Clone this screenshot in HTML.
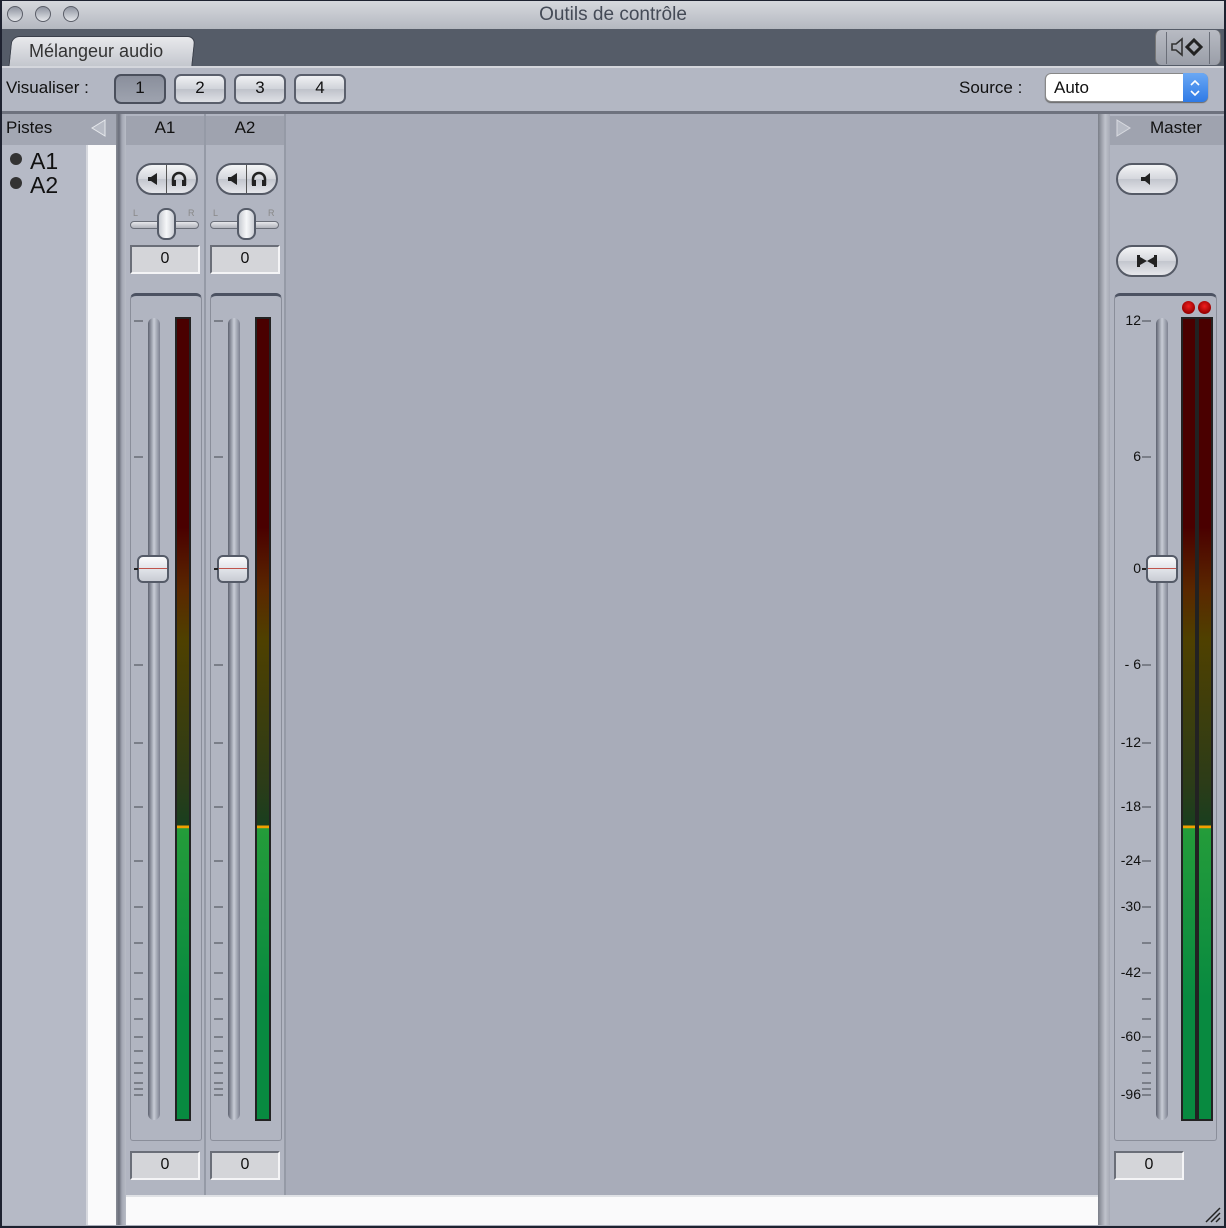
<!DOCTYPE html>
<html><head><meta charset="utf-8"><style>
*{margin:0;padding:0;box-sizing:border-box}
body{width:1226px;height:1228px;position:relative;overflow:hidden;background:#a8acb9;font-family:"Liberation Sans",sans-serif;color:#111}
.a{position:absolute}
.t{font-size:17px}
.btn{position:absolute;border:2px solid #5a5f6c;border-radius:7px;background:linear-gradient(#f0f1f4,#cfd2d9 50%,#bfc2ca 51%,#dfe1e6);text-align:center;font-size:17px;line-height:24px}
.pill{position:absolute;border:2px solid #555a66;border-radius:16px;background:linear-gradient(#f4f5f7,#d4d6dc 50%,#c3c6ce 51%,#e6e7eb)}
.vbox{position:absolute;background:#d4d5d9;border:2px solid #6a6e78;border-right-color:#f4f4f6;border-bottom-color:#f4f4f6;text-align:center;font-size:16px;line-height:24px}
.track{position:absolute;width:12px;border-radius:6px;background:linear-gradient(90deg,#5d6270,#c8ccd6 50%,#7d8290);}
.meter{position:absolute;border:2px solid #222;background:linear-gradient(#4a0000 0%,#4a0000 26%,#5a2800 34%,#4f4000 40%,#2c3c18 58%,#1a3e1e 63%,#1a3e1e 63.3%,#f0a000 63.3%,#f0a000 63.6%,#249c3a 63.7%,#088a40 85%,#088a40 100%)}
.knob{position:absolute;width:32px;height:28px;border:2px solid #555b68;border-radius:6px;background:linear-gradient(#fafbfc,#dcdfe5 60%,#c9ccd4)}
.knob:after{content:"";position:absolute;left:0;right:0;top:11px;height:1px;background:#c0544c}
.tick{position:absolute;height:2px;background:#7a7e88;width:9px}
.fbox{position:absolute;border:1px solid #8a8e9a;border-top:3px solid #4c5262;border-radius:6px 6px 3px 3px}
.lab{position:absolute;font-size:14px;text-align:right;width:40px}
</style></head><body>
<div class="a" style="left:0;top:0;width:1226px;height:1228px;border:2px solid #1e2230;border-top:1px solid #1e2230"></div>
<div class="a" style="left:2px;top:1px;width:1222px;height:28px;background:linear-gradient(#d6d8dd,#b4b8c0)"></div>
<div class="a" style="left:7px;top:6px;width:16px;height:16px;border-radius:50%;border:1px solid #5a5e68;background:linear-gradient(#8f94a0,#e4e6ea)"></div>
<div class="a" style="left:35px;top:6px;width:16px;height:16px;border-radius:50%;border:1px solid #5a5e68;background:linear-gradient(#8f94a0,#e4e6ea)"></div>
<div class="a" style="left:63px;top:6px;width:16px;height:16px;border-radius:50%;border:1px solid #5a5e68;background:linear-gradient(#8f94a0,#e4e6ea)"></div>
<div class="a t" style="left:0;width:1226px;top:4px;text-align:center;color:#444a56;font-size:19px">Outils de contrôle</div>
<div class="a" style="left:2px;top:29px;width:1222px;height:37px;background:#555c68"></div>
<div class="a" style="left:10px;top:36px;width:184px;height:30px;background:linear-gradient(#e8e9ec,#c4c7ce);border-radius:8px 8px 0 0;border:1px solid #3a3f4a;border-bottom:none;transform:skewX(-6deg)"></div>
<div class="a t" style="left:29px;top:41px;color:#333;font-size:18px">Mélangeur audio</div>
<div class="a" style="left:1155px;top:30px;width:66px;height:35px;background:linear-gradient(#b8bbc3,#9a9ea8);border-left:1px solid #777;border-right:1px solid #777;border-radius:6px"></div>
<div class="a" style="left:1166px;top:32px;width:44px;height:32px;border-left:1px solid #6a6e78;border-right:1px solid #6a6e78"></div>
<svg class="a" style="left:1170px;top:36px" width="38" height="22"><path d="M2 8h4l6-5v16l-6-5H2z" fill="none" stroke="#333" stroke-width="1.6"/><path d="M24 4l7 7-7 7-7-7z" fill="none" stroke="#222" stroke-width="3"/></svg>
<div class="a" style="left:2px;top:66px;width:1222px;height:46px;background:#b3b7c3;border-top:2px solid #d4d6dc"></div>
<div class="a t" style="left:6px;top:78px">Visualiser :</div>
<div class="btn" style="left:114px;top:74px;width:52px;height:30px;background:linear-gradient(#8a8f9c,#9ea3af);border-color:#4a4f5c">1</div>
<div class="btn" style="left:174px;top:74px;width:52px;height:30px">2</div>
<div class="btn" style="left:234px;top:74px;width:52px;height:30px">3</div>
<div class="btn" style="left:294px;top:74px;width:52px;height:30px">4</div>
<div class="a t" style="left:959px;top:78px">Source :</div>
<div class="a" style="left:1045px;top:73px;width:163px;height:29px;background:#fff;border-radius:6px;border:1px solid #888;box-shadow:0 1px 1px #666"></div>
<div class="a t" style="left:1054px;top:78px">Auto</div>
<div class="a" style="left:1183px;top:73px;width:25px;height:29px;background:linear-gradient(#6aa8f4,#2f7ae6);border-radius:0 6px 6px 0"></div>
<svg class="a" style="left:1188px;top:78px" width="14" height="20"><path d="M3 7l4-4 4 4M3 13l4 4 4-4" fill="none" stroke="#fff" stroke-width="1.6"/></svg>
<div class="a" style="left:2px;top:111px;width:1222px;height:3px;background:#6e727e"></div>
<div class="a" style="left:2px;top:114px;width:114px;height:1111px;background:#b6bac6"></div>
<div class="a" style="left:2px;top:114px;width:114px;height:31px;background:#a3a7b3"></div>
<div class="a t" style="left:6px;top:118px">Pistes</div>
<svg class="a" style="left:90px;top:118px" width="16" height="20"><path d="M15 2L2 10l13 8z" fill="#b8bcc6" stroke="#e6e8ec" stroke-width="1"/></svg>
<div class="a" style="left:86px;top:145px;width:30px;height:1080px;background:#fafafb;border-left:2px solid #d6d8de"></div>
<div class="a" style="left:10px;top:153px;width:12px;height:12px;border-radius:50%;background:#333"></div>
<div class="a" style="left:10px;top:177px;width:12px;height:12px;border-radius:50%;background:#333"></div>
<div class="a" style="left:30px;top:148px;font-size:23px">A1</div>
<div class="a" style="left:30px;top:172px;font-size:23px">A2</div>
<div class="a" style="left:116px;top:114px;width:10px;height:1111px;background:linear-gradient(90deg,#888c96,#6a6e7a 30%,#a4a8b4 60%,#b8bcc6)"></div>
<div class="a" style="left:126px;top:1195px;width:972px;height:30px;background:#fafafb;border-top:2px solid #dfe1e5"></div>
<div class="a" style="left:1098px;top:114px;width:12px;height:1111px;background:linear-gradient(90deg,#7a7e88,#9da1ab 30%,#bfc2cb 60%,#a6aab5)"></div>
<div class="a" style="left:1110px;top:114px;width:114px;height:1111px;background:#b1b5c1"></div>
<div class="a" style="left:1110px;top:116px;width:114px;height:29px;background:#9fa3af"></div>
<svg class="a" style="left:1115px;top:118px" width="16" height="20"><path d="M2 2l13 8-13 8z" fill="#b8bcc6" stroke="#d8dae0" stroke-width="1"/></svg>
<div class="a t" style="left:1150px;top:118px">Master</div>
<div class="pill" style="left:1116px;top:163px;width:62px;height:32px"></div>
<svg class="a" style="left:1138px;top:171px" width="16" height="16"><path d="M3 6h4l5-4v12l-5-4H3z" fill="#222"/></svg>
<div class="pill" style="left:1116px;top:245px;width:62px;height:32px"></div>
<svg class="a" style="left:1133px;top:253px" width="28" height="16"><path d="M4 2h3v12H4zM21 2h3v12h-3z" fill="#222"/><path d="M7 4l7 4-7 4zM21 4l-7 4 7 4z" fill="#222"/></svg>
<div class="fbox" style="left:1114px;top:293px;width:103px;height:848px"></div>
<div class="track" style="left:1156px;top:318px;height:802px"></div>
<div class="meter" style="left:1181px;top:317px;width:16px;height:804px"></div>
<div class="meter" style="left:1197px;top:317px;width:16px;height:804px"></div>
<div class="a" style="left:1182px;top:301px;width:13px;height:13px;border-radius:50%;background:radial-gradient(circle at 50% 40%,#f02020,#900 70%,#444)"></div>
<div class="a" style="left:1198px;top:301px;width:13px;height:13px;border-radius:50%;background:radial-gradient(circle at 50% 40%,#f02020,#900 70%,#444)"></div>
<div class="knob" style="left:1146px;top:555px"></div>
<div class="lab" style="left:1101px;top:312px">12</div>
<div class="lab" style="left:1101px;top:448px">6</div>
<div class="lab" style="left:1101px;top:560px">0</div>
<div class="lab" style="left:1101px;top:656px">- 6</div>
<div class="lab" style="left:1101px;top:734px">-12</div>
<div class="lab" style="left:1101px;top:798px">-18</div>
<div class="lab" style="left:1101px;top:852px">-24</div>
<div class="lab" style="left:1101px;top:898px">-30</div>
<div class="lab" style="left:1101px;top:964px">-42</div>
<div class="lab" style="left:1101px;top:1028px">-60</div>
<div class="lab" style="left:1101px;top:1086px">-96</div>
<div class="tick" style="left:1142px;top:320px"></div><div class="tick" style="left:1142px;top:456px"></div><div class="tick" style="left:1142px;top:568px;background:#222;width:4px"></div><div class="tick" style="left:1142px;top:664px"></div><div class="tick" style="left:1142px;top:742px"></div><div class="tick" style="left:1142px;top:806px"></div><div class="tick" style="left:1142px;top:860px"></div><div class="tick" style="left:1142px;top:906px"></div><div class="tick" style="left:1142px;top:942px"></div><div class="tick" style="left:1142px;top:972px"></div><div class="tick" style="left:1142px;top:998px"></div><div class="tick" style="left:1142px;top:1018px"></div><div class="tick" style="left:1142px;top:1036px"></div><div class="tick" style="left:1142px;top:1050px"></div><div class="tick" style="left:1142px;top:1062px"></div><div class="tick" style="left:1142px;top:1072px"></div><div class="tick" style="left:1142px;top:1082px"></div><div class="tick" style="left:1142px;top:1088px"></div><div class="tick" style="left:1142px;top:1094px"></div>
<div class="vbox" style="left:1114px;top:1151px;width:70px;height:29px">0</div>
<svg class="a" style="left:1204px;top:1206px" width="18" height="18"><path d="M2 16L16 2M7 16L16 7M12 16l4-4" stroke="#222" stroke-width="1.5"/></svg>

<div class="a" style="left:126px;top:114px;width:80px;height:1081px;background:#b1b5c1;border-right:2px solid #959aa6"></div>
<div class="a" style="left:126px;top:116px;width:78px;height:29px;background:#9fa3af"></div>
<div class="a t" style="left:126px;width:78px;top:118px;text-align:center">A1</div>
<div class="pill" style="left:136px;top:163px;width:62px;height:32px"></div>
<div class="a" style="left:166px;top:165px;width:1px;height:28px;background:#555"></div>
<svg class="a" style="left:144px;top:171px" width="18" height="16"><path d="M4 6h3l6-4v12l-6-4H4z" fill="#222"/></svg>
<svg class="a" style="left:169px;top:170px" width="20" height="18"><path d="M4 15V9a6 6 0 0 1 12 0v6" fill="none" stroke="#222" stroke-width="2.5"/><rect x="3" y="10" width="4" height="6" fill="#222"/><rect x="13" y="10" width="4" height="6" fill="#222"/></svg>
<div class="a" style="left:133px;top:208px;font-size:9px;color:#888">L</div>
<div class="a" style="left:188px;top:208px;font-size:9px;color:#888">R</div>
<div class="a" style="left:130px;top:221px;width:69px;height:8px;border-radius:4px;border:1px solid #6a6e78;background:linear-gradient(#e8e9ec,#b0b3bb)"></div>
<div class="a" style="left:157px;top:208px;width:19px;height:32px;border:2px solid #555b68;border-radius:9px 9px 8px 8px;background:linear-gradient(90deg,#c8cbd2,#f6f7f9 50%,#cbced5)"></div>
<div class="vbox" style="left:130px;top:245px;width:70px;height:29px">0</div>
<div class="fbox" style="left:130px;top:293px;width:72px;height:848px"></div>
<div class="track" style="left:148px;top:318px;height:802px"></div>
<div class="meter" style="left:175px;top:317px;width:16px;height:804px"></div>
<div class="knob" style="left:137px;top:555px"></div>
<div class="tick" style="left:134px;top:320px"></div><div class="tick" style="left:134px;top:456px"></div><div class="tick" style="left:134px;top:568px;background:#222;width:4px"></div><div class="tick" style="left:134px;top:664px"></div><div class="tick" style="left:134px;top:742px"></div><div class="tick" style="left:134px;top:806px"></div><div class="tick" style="left:134px;top:860px"></div><div class="tick" style="left:134px;top:906px"></div><div class="tick" style="left:134px;top:942px"></div><div class="tick" style="left:134px;top:972px"></div><div class="tick" style="left:134px;top:998px"></div><div class="tick" style="left:134px;top:1018px"></div><div class="tick" style="left:134px;top:1036px"></div><div class="tick" style="left:134px;top:1050px"></div><div class="tick" style="left:134px;top:1062px"></div><div class="tick" style="left:134px;top:1072px"></div><div class="tick" style="left:134px;top:1082px"></div><div class="tick" style="left:134px;top:1088px"></div><div class="tick" style="left:134px;top:1094px"></div>
<div class="vbox" style="left:130px;top:1151px;width:70px;height:29px">0</div>

<div class="a" style="left:206px;top:114px;width:80px;height:1081px;background:#b1b5c1;border-right:2px solid #959aa6"></div>
<div class="a" style="left:206px;top:116px;width:78px;height:29px;background:#9fa3af"></div>
<div class="a t" style="left:206px;width:78px;top:118px;text-align:center">A2</div>
<div class="pill" style="left:216px;top:163px;width:62px;height:32px"></div>
<div class="a" style="left:246px;top:165px;width:1px;height:28px;background:#555"></div>
<svg class="a" style="left:224px;top:171px" width="18" height="16"><path d="M4 6h3l6-4v12l-6-4H4z" fill="#222"/></svg>
<svg class="a" style="left:249px;top:170px" width="20" height="18"><path d="M4 15V9a6 6 0 0 1 12 0v6" fill="none" stroke="#222" stroke-width="2.5"/><rect x="3" y="10" width="4" height="6" fill="#222"/><rect x="13" y="10" width="4" height="6" fill="#222"/></svg>
<div class="a" style="left:213px;top:208px;font-size:9px;color:#888">L</div>
<div class="a" style="left:268px;top:208px;font-size:9px;color:#888">R</div>
<div class="a" style="left:210px;top:221px;width:69px;height:8px;border-radius:4px;border:1px solid #6a6e78;background:linear-gradient(#e8e9ec,#b0b3bb)"></div>
<div class="a" style="left:237px;top:208px;width:19px;height:32px;border:2px solid #555b68;border-radius:9px 9px 8px 8px;background:linear-gradient(90deg,#c8cbd2,#f6f7f9 50%,#cbced5)"></div>
<div class="vbox" style="left:210px;top:245px;width:70px;height:29px">0</div>
<div class="fbox" style="left:210px;top:293px;width:72px;height:848px"></div>
<div class="track" style="left:228px;top:318px;height:802px"></div>
<div class="meter" style="left:255px;top:317px;width:16px;height:804px"></div>
<div class="knob" style="left:217px;top:555px"></div>
<div class="tick" style="left:214px;top:320px"></div><div class="tick" style="left:214px;top:456px"></div><div class="tick" style="left:214px;top:568px;background:#222;width:4px"></div><div class="tick" style="left:214px;top:664px"></div><div class="tick" style="left:214px;top:742px"></div><div class="tick" style="left:214px;top:806px"></div><div class="tick" style="left:214px;top:860px"></div><div class="tick" style="left:214px;top:906px"></div><div class="tick" style="left:214px;top:942px"></div><div class="tick" style="left:214px;top:972px"></div><div class="tick" style="left:214px;top:998px"></div><div class="tick" style="left:214px;top:1018px"></div><div class="tick" style="left:214px;top:1036px"></div><div class="tick" style="left:214px;top:1050px"></div><div class="tick" style="left:214px;top:1062px"></div><div class="tick" style="left:214px;top:1072px"></div><div class="tick" style="left:214px;top:1082px"></div><div class="tick" style="left:214px;top:1088px"></div><div class="tick" style="left:214px;top:1094px"></div>
<div class="vbox" style="left:210px;top:1151px;width:70px;height:29px">0</div>
</body></html>
